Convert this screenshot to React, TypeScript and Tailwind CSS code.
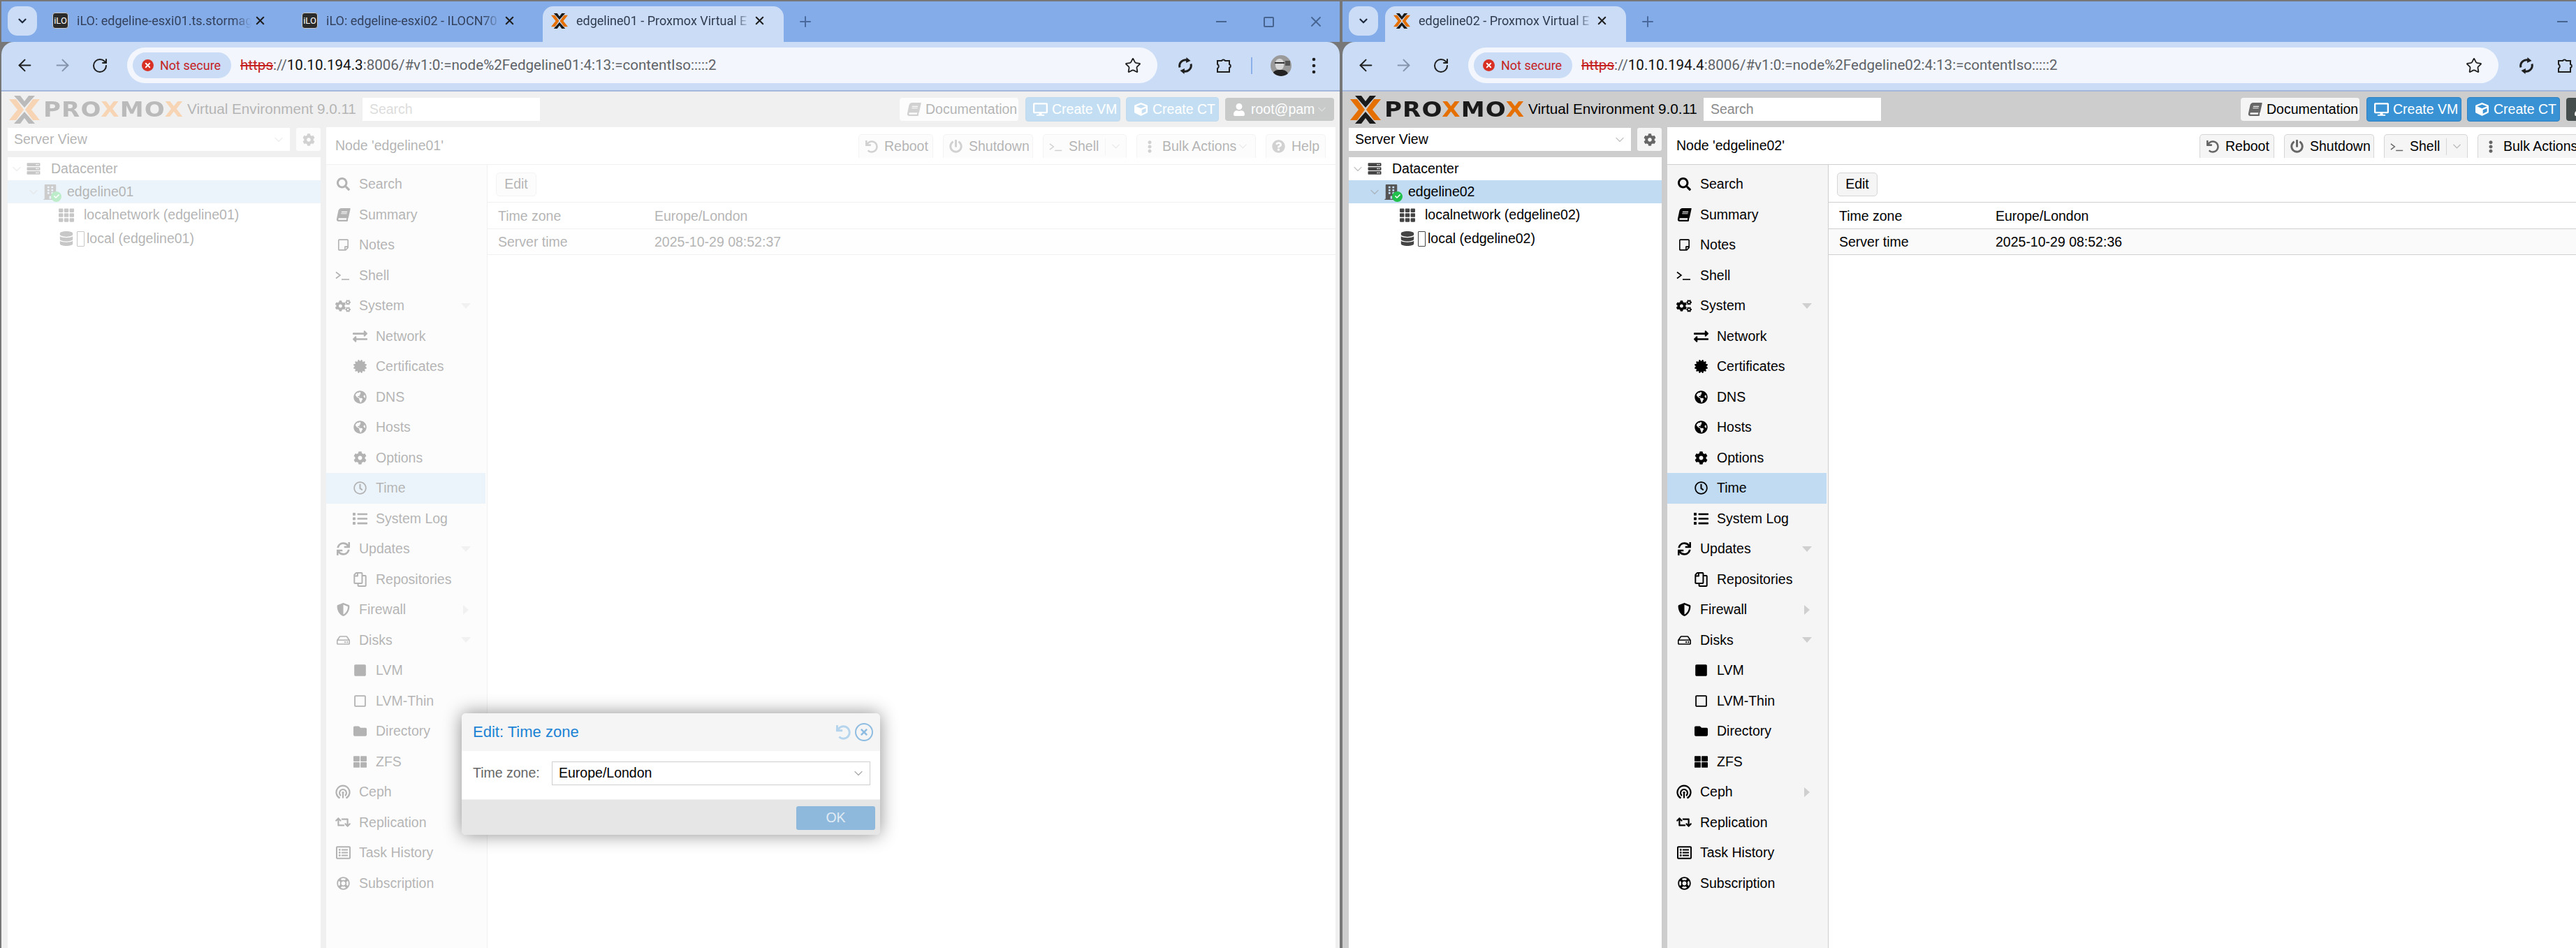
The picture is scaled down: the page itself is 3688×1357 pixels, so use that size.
import type { ReactNode } from "react";
import { ArrowLeft, ArrowRight, ChevronDown, Plus, RotateCw, Star, X } from "lucide-react";
import {
  FaBook,
  FaBuilding,
  FaCheck,
  FaCog,
  FaCogs,
  FaCertificate,
  FaCube,
  FaDatabase,
  FaDesktop,
  FaEllipsisV,
  FaExchangeAlt,
  FaFolder,
  FaGlobeAmericas,
  FaList,
  FaPowerOff,
  FaQuestionCircle,
  FaRegClock,
  FaRegCopy,
  FaRegHdd,
  FaRegLifeRing,
  FaRegListAlt,
  FaRegSquare,
  FaRegStickyNote,
  FaRetweet,
  FaSearch,
  FaServer,
  FaShieldAlt,
  FaSquare,
  FaSync,
  FaTh,
  FaThLarge,
  FaTimes,
  FaUndo,
  FaUser,
} from "react-icons/fa";

const ICON = 19;

function TermIcon({ size = 22 }: { size?: number }) {
  return (
    <svg width={size} height={size} viewBox="0 0 22 22" fill="none" stroke="currentColor" strokeWidth="1.6">
      <path d="M1 6.5l6 4.5-6 4.5" />
      <path d="M9 17h11" />
    </svg>
  );
}

function CephIcon() {
  return (
    <svg width="22" height="22" viewBox="0 0 22 22" fill="none" stroke="currentColor" strokeWidth="2.2">
      <path d="M6.5 19.5A9.5 9.5 0 1 1 15.5 19.5" />
      <path d="M8 16a5 5 0 1 1 6 0" />
      <circle cx="11" cy="11.5" r="1.6" fill="currentColor" stroke="none" />
      <path d="M11 12.5v7" />
    </svg>
  );
}

function BookIcon({ size = ICON }: { size?: number }) {
  return <FaBook size={size} className="-skew-x-12" />;
}

function ProxmoxMark({ w = 44, h = 40 }: { w?: number; h?: number }) {
  return (
    <svg width={w} height={h} viewBox="0 0 44 40">
      <path fill="#e57000" d="M0 5h10l11 15-11 15H0l12-15z" />
      <path fill="#e57000" d="M44 5H34L23 20l11 15h10L32 20z" />
      <path fill="#1a1a1a" d="M7 0h9l6 8 6-8h9L22 17z" />
      <path fill="#1a1a1a" d="M7 40h9l6-8 6 8h9L22 23z" />
    </svg>
  );
}

function SyncIcon() {
  return (
    <svg width="26" height="26" viewBox="0 0 26 26" fill="none" stroke="currentColor" strokeWidth="3">
      <path d="M5 15.5A8.5 8.5 0 0 1 16.5 5.5" />
      <path d="M21 10.5A8.5 8.5 0 0 1 9.5 20.5" />
      <path d="M14.5 1l6 5-6.5 3z" fill="currentColor" stroke="none" />
      <path d="M11.5 25l-6-5 6.5-3z" fill="currentColor" stroke="none" />
    </svg>
  );
}

function IloIcon() {
  return (
    <div className="flex h-[23px] w-[23px] shrink-0 items-center justify-center rounded-[4px] border border-[#c9c9c9] bg-[#2b2b2b] text-[13px] leading-none text-white">
      iLO
    </div>
  );
}

function Tab({ title, active, ilo }: { title: string; active?: boolean; ilo?: boolean }) {
  return (
    <div className="relative h-[51px] w-[357px] shrink-0">
      <div
        className={`flex h-[51px] w-[345px] items-start rounded-t-[15px] pl-[12px] pt-[9px] ${
          active ? "bg-[#cadcf6] text-[#2f3a4d]" : "text-[#33415c]"
        }`}
      >
        {ilo ? <IloIcon /> : <ProxmoxMark w={24} h={24} />}
        <span className="ml-[12px] w-[250px] overflow-hidden whitespace-nowrap text-[18px] leading-[24px] [mask-image:linear-gradient(to_right,black_90%,transparent)]">
          {title}
        </span>
        <X size={19} strokeWidth={2.6} className="ml-[3px] mt-[2px] shrink-0 text-[#1f1f1f]" />
      </div>
    </div>
  );
}

function ChromeBar({ ip, node, tabs }: { ip: string; node: string; tabs: ReactNode }) {
  return (
    <>
      <div className="flex h-[58px] shrink-0 items-end bg-[#84ace9]">
        <div className="mb-[9px] ml-[9px] mr-[10px] flex h-[42px] w-[42px] items-center justify-center rounded-[14px] bg-[#cadcf6]">
          <ChevronDown size={18} strokeWidth={3} className="text-[#1f2a3d]" />
        </div>
        {tabs}
        <Plus size={24} strokeWidth={2} className="mb-[17px] ml-[7px] text-[#4a6a9e]" />
        <div className="ml-auto flex self-center text-[#46648f]">
          <div className="flex h-[40px] w-[68px] items-center justify-center">
            <div className="h-[2px] w-[15px] bg-[#46648f]" />
          </div>
          <div className="flex h-[40px] w-[68px] items-center justify-center">
            <div className="h-[15px] w-[15px] rounded-[2px] border-2 border-[#46648f]" />
          </div>
          <div className="flex h-[40px] w-[68px] items-center justify-center">
            <X size={24} strokeWidth={1.8} />
          </div>
        </div>
      </div>

      <div className="flex h-[71px] shrink-0 items-center rounded-t-[18px] border-b-2 border-[#a3b8da] bg-[#cadcf6] pb-[2px] pl-[6px] pr-0">
        <div className="flex w-[54px] justify-center text-[#1f1f1f]">
          <ArrowLeft size={27} strokeWidth={1.8} />
        </div>
        <div className="flex w-[54px] justify-center text-[#8594ab]">
          <ArrowRight size={27} strokeWidth={1.8} />
        </div>
        <div className="flex w-[54px] justify-center text-[#1f1f1f]">
          <RotateCw size={24} strokeWidth={2} />
        </div>
        <div className="ml-[12px] flex h-[51px] w-[1475px] items-center rounded-full bg-[#f3f7fd] pl-[8px] pr-[23px]">
          <div className="flex h-[37px] w-[141px] items-center rounded-full bg-[#cadcf6] pl-[13px] text-[18px] text-[#c5221f]">
            <span className="flex h-[17px] w-[17px] items-center justify-center rounded-full bg-[#d93025]">
              <X size={11} strokeWidth={4} className="text-white" />
            </span>
            <span className="ml-[9px] whitespace-nowrap">Not secure</span>
          </div>
          <div className="ml-[13px] whitespace-nowrap text-[20.6px] text-[#5f6368]">
            <span className="text-[#c5221f] line-through">https</span>
            ://
            <span className="text-[#111]">{ip}</span>
            :8006/#v1:0:=node%2F{node}:4:13:=contentIso:::::2
          </div>
          <Star size={24} strokeWidth={1.8} className="ml-auto text-[#1f1f1f]" />
        </div>
        <div className="ml-[26px] flex w-[28px] justify-center text-[#1f1f1f]">
          <SyncIcon />
        </div>
        <div className="ml-[27px] flex w-[28px] justify-center text-[#1f1f1f]">
          <svg width="26" height="26" viewBox="0 0 26 26" fill="none" stroke="currentColor" strokeWidth="2">
            <path d="M4 6h6a2.8 2.8 0 0 1 5 0h6v5a2.6 2.6 0 0 1 0 5v6H4v-5a3.4 3.4 0 0 0 0-6z" />
          </svg>
        </div>
        <div className="ml-[25px] h-[24px] w-[2px] bg-[#8db0ea]" />
        <div className="relative ml-[26px] h-[30px] w-[30px] overflow-hidden rounded-full bg-[#9a9a9a]">
          <div className="absolute left-[7px] top-[5px] h-[16px] w-[12px] rounded-full bg-[#d8d8d8]" />
          <div className="absolute left-[6px] top-[10px] h-[2px] w-[14px] bg-[#333]" />
          <div className="absolute right-[2px] top-[8px] h-[7px] w-[7px] bg-[#555]" />
          <div className="absolute bottom-0 left-[2px] h-[9px] w-[24px] rounded-t-full bg-[#222]" />
        </div>
        <div className="ml-[24px] flex w-[16px] justify-center text-[#1f1f1f]">
          <svg width="6" height="24" viewBox="0 0 6 24" fill="currentColor">
            <circle cx="3" cy="3" r="2.3" />
            <circle cx="3" cy="12" r="2.3" />
            <circle cx="3" cy="21" r="2.3" />
          </svg>
        </div>
      </div>
    </>
  );
}

function TopButton({ w, cls, icon, children, caret }: { w: string; cls: string; icon: ReactNode; children: ReactNode; caret?: boolean }) {
  return (
    <div className={`flex items-center rounded-[4px] ${w} ${cls}`}>
      <span className="flex w-[37px] shrink-0 items-center justify-center pl-[3px]">{icon}</span>
      <span className="whitespace-nowrap">{children}</span>
      {caret && <ChevronDown size={19} strokeWidth={1.6} className="ml-auto mr-[8px] text-[#9a9a9a]" />}
    </div>
  );
}

function NavButton({ w, icon, children, split, caret }: { w: string; icon: ReactNode; children: ReactNode; split?: boolean; caret?: boolean }) {
  return (
    <div className={`flex h-[34px] items-center rounded-t-[5px] border-x border-t border-[#d6d6d6] bg-[#f5f5f5] ${w}`}>
      <span className="flex w-[32px] shrink-0 items-center justify-center pl-[3px] text-[#666]">{icon}</span>
      <span className="ml-[4px] whitespace-nowrap">{children}</span>
      {split && <span className="ml-auto h-[24px] w-px bg-[#d6d6d6]" />}
      {caret && <ChevronDown size={19} strokeWidth={1.6} className={`${split ? "mx-[5px]" : "ml-auto mr-[8px]"} text-[#b5b5b5]`} />}
    </div>
  );
}

type Item = { icon: ReactNode; label: string; child?: boolean; arrow?: "down" | "right"; active?: boolean };

const menu: Item[] = [
  { icon: <FaSearch size={ICON} />, label: "Search" },
  { icon: <BookIcon />, label: "Summary" },
  { icon: <FaRegStickyNote size={ICON} className="scale-x-90" />, label: "Notes" },
  { icon: <TermIcon />, label: "Shell" },
  { icon: <FaCogs size={22} />, label: "System", arrow: "down" },
  { icon: <FaExchangeAlt size={21} />, label: "Network", child: true },
  { icon: <FaCertificate size={ICON} />, label: "Certificates", child: true },
  { icon: <FaGlobeAmericas size={ICON} />, label: "DNS", child: true },
  { icon: <FaGlobeAmericas size={ICON} />, label: "Hosts", child: true },
  { icon: <FaCog size={ICON} />, label: "Options", child: true },
  { icon: <FaRegClock size={ICON} />, label: "Time", child: true, active: true },
  { icon: <FaList size={21} />, label: "System Log", child: true },
  { icon: <FaSync size={ICON} />, label: "Updates", arrow: "down" },
  { icon: <FaRegCopy size={21} className="-scale-x-100" />, label: "Repositories", child: true },
  { icon: <FaShieldAlt size={ICON} />, label: "Firewall", arrow: "right" },
  { icon: <FaRegHdd size={ICON} />, label: "Disks", arrow: "down" },
  { icon: <FaSquare size={ICON} />, label: "LVM", child: true },
  { icon: <FaRegSquare size={ICON} />, label: "LVM-Thin", child: true },
  { icon: <FaFolder size={ICON} />, label: "Directory", child: true },
  { icon: <FaThLarge size={ICON} />, label: "ZFS", child: true },
  { icon: <CephIcon />, label: "Ceph", arrow: "right" },
  { icon: <FaRetweet size={22} />, label: "Replication" },
  { icon: <FaRegListAlt size={21} />, label: "Task History" },
  { icon: <FaRegLifeRing size={ICON} />, label: "Subscription" },
];

function MenuRow({ item }: { item: Item }) {
  return (
    <div className={`flex h-[43.5px] w-[228px] items-center ${item.child ? "pl-[37px]" : "pl-[13px]"} ${item.active ? "bg-[#c0dbf2]" : ""}`}>
      <span className="flex w-[22px] shrink-0 items-center justify-center text-black">{item.icon}</span>
      <span className="ml-[12px] whitespace-nowrap">{item.label}</span>
      {item.arrow === "down" && (
        <svg width="14" height="8" viewBox="0 0 14 8" className="ml-auto mr-[21px] fill-[#cfcfcf]">
          <path d="M0 0h14L7 8z" />
        </svg>
      )}
      {item.arrow === "right" && (
        <span className="ml-auto mr-[21px] flex w-[14px] justify-center">
          <svg width="8" height="14" viewBox="0 0 8 14" className="fill-[#cfcfcf]">
            <path d="M0 0l8 7-8 7z" />
          </svg>
        </span>
      )}
    </div>
  );
}

function ProxmoxPage({ node, time, masked }: { node: string; time: string; masked?: boolean }) {
  return (
    <div className="relative flex min-h-0 flex-1 flex-col bg-[#cdcdcd] text-[19.5px] leading-none text-black [font-family:'Liberation_Sans',Arial,sans-serif]">
      {/* Top bar */}
      <div className="flex h-[51px] shrink-0 items-center pl-[11px] pr-[8px]">
        <ProxmoxMark />
        <div className="ml-[5px] w-[201px] shrink-0">
          <div className="w-fit origin-left scale-x-[1.1] whitespace-nowrap text-[31px] font-bold leading-none tracking-[1px] text-[#1a1a1a] [font-family:'DejaVu_Sans',sans-serif]">
            PRO<span className="text-[#e57000]">X</span>MO<span className="text-[#e57000]">X</span>
          </div>
        </div>
        <span className="ml-[5px] whitespace-nowrap text-[20.7px]">Virtual Environment 9.0.11</span>
        <div className="ml-[9px] flex h-[33px] w-[254px] items-center bg-white pl-[10px] text-[#8a8a8a]">Search</div>
        <div className="ml-auto flex items-center">
          <TopButton w="h-[33px] w-[170px]" cls="bg-[#f5f5f5] text-black" icon={<span className="text-[#666]"><BookIcon /></span>}>
            Documentation
          </TopButton>
          <TopButton w="ml-[10px] h-[35px] w-[136px]" cls="border border-[#2f80c2] bg-[#3892d4] text-white" icon={<FaDesktop size={21} />}>
            Create VM
          </TopButton>
          <TopButton w="ml-[8px] h-[35px] w-[133px]" cls="border border-[#2f80c2] bg-[#3892d4] text-white" icon={<FaCube size={19} />}>
            Create CT
          </TopButton>
          <TopButton w="ml-[9px] h-[33px] w-[156px]" cls="bg-[#464d4d] text-white" icon={<FaUser size={18} />} caret>
            root@pam
          </TopButton>
        </div>
      </div>

      <div className="flex min-h-0 flex-1 pl-[9px] pr-[6px]">
        {/* Resource tree */}
        <div className="flex w-[448px] shrink-0 flex-col pt-px">
          <div className="flex h-[33px] shrink-0 justify-between">
            <div className="flex w-[404px] items-center bg-white pl-[9px] pr-[6px]">
              Server View
              <ChevronDown size={20} strokeWidth={1.5} className="ml-auto text-[#c4c4c4]" />
            </div>
            <div className="flex w-[35px] items-center justify-center rounded-[3px] bg-[#f5f5f5] text-[#666]">
              <FaCog size={18} />
            </div>
          </div>
          <div className="mt-[9px] flex-1 bg-white">
            <div className="flex h-[33px] items-center pl-[3px]">
              <ChevronDown size={20} strokeWidth={1.5} className="text-[#c4c4c4]" />
              <FaServer size={19} className="ml-[3px] w-[22px] text-[#444]" />
              <span className="ml-[14px]">Datacenter</span>
            </div>
            <div className="flex h-[33px] items-center bg-[#c0dbf2] pl-[27px]">
              <ChevronDown size={20} strokeWidth={1.5} className="text-[#aab4bd]" />
              <span className="relative ml-[4px] flex w-[20px] justify-center">
                <FaBuilding size={22} className="text-[#555]" />
                <span className="absolute -right-[6px] bottom-[-3px] flex h-[15px] w-[15px] items-center justify-center rounded-full bg-[#21bf4b] text-white">
                  <FaCheck size={8} />
                </span>
              </span>
              <span className="ml-[14px]">{node}</span>
            </div>
            <div className="flex h-[33.5px] items-center pl-[73px]">
              <FaTh size={22} className="text-[#444]" />
              <span className="ml-[14px]">localnetwork ({node})</span>
            </div>
            <div className="flex h-[34.5px] items-center pl-[73px]">
              <FaDatabase size={21} className="w-[22px] text-[#444]" />
              <span className="ml-[4px] h-[22px] w-[11px] rounded-[1px] border border-[#444]" />
              <span className="ml-[3px]">local ({node})</span>
            </div>
          </div>
        </div>

        {/* Node panel */}
        <div className="ml-[8px] flex w-[1445px] shrink-0 flex-col bg-white pt-px">
          <div className="flex h-[53px] shrink-0 items-center border-b border-[#cfcfcf] pl-[13px] pr-[14px]">
            <span className="whitespace-nowrap">Node '{node}'</span>
            <div className="ml-auto flex gap-[14px]">
              <NavButton w="w-[107px]" icon={<FaUndo size={18} />}>Reboot</NavButton>
              <NavButton w="w-[129px]" icon={<FaPowerOff size={19} />}>Shutdown</NavButton>
              <NavButton w="w-[120px]" icon={<TermIcon size={20} />} split caret>Shell</NavButton>
              <NavButton w="w-[171px]" icon={<FaEllipsisV size={18} />} caret>Bulk Actions</NavButton>
              <NavButton w="w-[86px]" icon={<FaQuestionCircle size={19} />}>Help</NavButton>
            </div>
          </div>
          <div className="flex min-h-0 flex-1">
            <div className="w-[231px] shrink-0 border-r border-[#cfcfcf] bg-[#f5f5f5] pt-[6px]">
              {menu.map((item) => (
                <MenuRow key={item.label} item={item} />
              ))}
            </div>
            <div className="min-w-0 flex-1">
              <div className="flex h-[54px] items-center border-b border-[#cfcfcf] pl-[12px] pt-[2px]">
                <div className="flex h-[34px] w-[58px] items-center justify-center rounded-[5px] border border-[#d6d6d6] bg-[#f5f5f5]">Edit</div>
              </div>
              <div className="flex h-[38px] items-center border-b border-[#cfcfcf] pt-[3px]">
                <span className="w-[239px] pl-[15px]">Time zone</span>
                <span>Europe/London</span>
              </div>
              <div className="flex h-[37px] items-center border-b border-[#cfcfcf] bg-[#fafafa] pt-[2px]">
                <span className="w-[239px] pl-[15px]">Server time</span>
                <span>{time}</span>
              </div>
            </div>
          </div>
        </div>
      </div>

      {masked && (
        <>
          <div className="absolute inset-0 bg-white/70" />
          <div className="absolute left-[659px] top-[890px] flex h-[174px] w-[599px] flex-col overflow-hidden rounded-[6px] shadow-[0_0_26px_rgba(0,0,0,0.45)]">
            <div className="flex h-[54px] shrink-0 items-center bg-[#f5f5f5] pl-[16px] pr-[10px] text-[22px] text-[#1c83d4]">
              Edit: Time zone
              <FaUndo size={21} className="ml-auto text-[#b5d5ee]" />
              <span className="ml-[6px] flex h-[26px] w-[26px] items-center justify-center rounded-full border-2 border-[#8fbde2] text-[#8fbde2]">
                <FaTimes size={14} />
              </span>
            </div>
            <div className="flex h-[69px] shrink-0 items-center bg-white pb-[6px] pl-[16px] pr-[14px]">
              <span className="w-[113px] text-[#666]">Time zone:</span>
              <div className="flex h-[34px] flex-1 items-center border border-[#cfcfcf] pl-[9px] pr-[6px]">
                Europe/London
                <ChevronDown size={20} strokeWidth={1.5} className="ml-auto text-[#aaa]" />
              </div>
            </div>
            <div className="flex flex-1 items-start justify-end border-t border-[#f0f0f0] bg-[#e6e6e6] pr-[7px] pt-[9px]">
              <div className="flex h-[34px] w-[113px] items-center justify-center rounded-[3px] bg-[#8fb9dc] text-[#e0ebf4]">OK</div>
            </div>
          </div>
        </>
      )}
    </div>
  );
}

function BrowserWindow({ ip, node, time, masked, tabs }: { ip: string; node: string; time: string; masked?: boolean; tabs: ReactNode }) {
  return (
    <div className="flex h-full w-[1918px] shrink-0 flex-col border-l-2 border-[#777] [font-family:Roboto,'Noto_Sans',sans-serif]">
      <ChromeBar ip={ip} node={node} tabs={tabs} />
      <ProxmoxPage node={node} time={time} masked={masked} />
    </div>
  );
}

export default function App() {
  return (
    <div className="flex h-[1357px] w-[3688px] overflow-hidden bg-[#777] pt-[2px]">
      <BrowserWindow
        ip="10.10.194.3"
        node="edgeline01"
        time="2025-10-29 08:52:37"
        masked
        tabs={
          <>
            <Tab ilo title="iLO: edgeline-esxi01.ts.stormagi" />
            <Tab ilo title="iLO: edgeline-esxi02 - ILOCN70" />
            <Tab active title="edgeline01 - Proxmox Virtual E" />
          </>
        }
      />
      <div className="ml-[2px] h-full min-w-0 flex-1 overflow-hidden">
        <BrowserWindow
          ip="10.10.194.4"
          node="edgeline02"
          time="2025-10-29 08:52:36"
          tabs={<Tab active title="edgeline02 - Proxmox Virtual E" />}
        />
      </div>
    </div>
  );
}
